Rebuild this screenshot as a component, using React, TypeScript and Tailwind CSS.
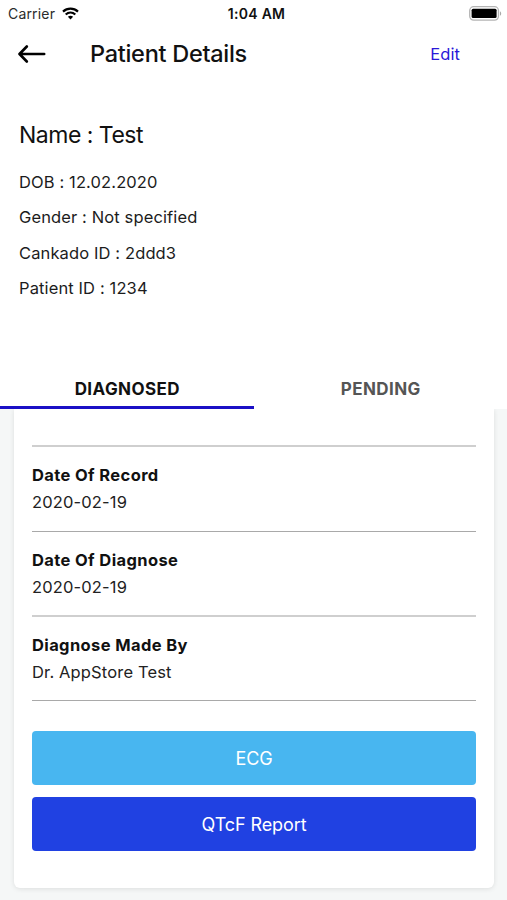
import React from "react";
import clsx from "clsx";

const patient = [
  { label: "DOB", value: "12.02.2020" },
  { label: "Gender", value: "Not specified" },
  { label: "Cankado ID", value: "2ddd3" },
  { label: "Patient ID", value: "1234" },
];

const records = [
  { label: "Date Of Record", value: "2020-02-19", className: "h-[85px] border-b border-[#a9a9a9]" },
  { label: "Date Of Diagnose", value: "2020-02-19", className: "h-[85px] border-b-2 border-[#cfcfcf]" },
  { label: "Diagnose Made By", value: "Dr. AppStore Test", className: "h-[84px] border-b border-[#a9a9a9]" },
];

const StatusBar = () => {
  return (
    <div className="grid h-[27px] grid-cols-3 items-center pl-2 pr-[5px] text-[14px]">
      <div className="flex items-center gap-[7px] text-[#2b2b2b]">
        <span className="tracking-[0.17px]">Carrier</span>
        <svg width="17" height="13" viewBox="0 0 17 13" fill="none" stroke="#000" strokeWidth="2.2">
          <path d="M1 4.6C5.2.7 11.8.7 16 4.6" />
          <path d="M3.7 7.5c2.8-2.5 6.8-2.5 9.6 0" />
          <path d="M8.5 12.4 5.9 9.8c1.5-1.3 3.7-1.3 5.2 0z" fill="#000" stroke="none" />
        </svg>
      </div>
      <span className="pl-[3px] text-center font-semibold tracking-[0.3px] text-[#111]">1:04 AM</span>
      <svg className="justify-self-end" width="33" height="15" viewBox="0 0 33 15">
        <rect x="0.7" y="0.7" width="28.8" height="13.4" rx="4" fill="#fff" stroke="#b4b4b4" strokeWidth="1.3" />
        <rect x="2.6" y="2.7" width="25" height="9.4" rx="1.5" fill="#000" />
        <path d="M31 5.2c1.6.8 1.6 3.8 0 4.6z" fill="#a8a8a8" />
      </svg>
    </div>
  );
};

const Header = () => {
  return (
    <header className="flex h-[53px] items-center pl-[18px] pr-[47px]">
      <button type="button" aria-label="Back">
        <svg
          width="28"
          height="20"
          viewBox="0 0 28 20"
          fill="none"
          stroke="#000"
          strokeWidth="2.6"
          strokeLinecap="round"
          strokeLinejoin="round"
        >
          <path d="M8.8 2.5 1.5 10l7.3 7.5M2 10h24.2" />
        </svg>
      </button>
      <h1 className="ml-[44px] pt-px text-[23.5px] font-medium tracking-[-0.28px] text-[#111]">Patient Details</h1>
      <button type="button" className="ml-auto pt-px text-[16.5px] tracking-[0.1px] text-[#2a18d8]">
        Edit
      </button>
    </header>
  );
};

const App = () => {
  return (
    <div className="flex h-[900px] w-[507px] flex-col overflow-hidden bg-white font-['Inter',sans-serif]">
      <StatusBar />
      <Header />
      <section className="h-[289px] px-[19px] pt-[38px] text-[#1c1c1c]">
        <h2 className="text-[23px] leading-[34px] tracking-[-0.5px] text-[#111]">Name : Test</h2>
        <div className="mt-[13px] text-[16.5px] leading-[35.4px] tracking-[0.12px]">
          {patient.map(({ label, value }) => (
            <p key={label}>
              {label} : {value}
            </p>
          ))}
        </div>
      </section>
      <nav className="grid h-10 grid-cols-2 text-[17px] font-bold tracking-[0.4px]">
        <button type="button" className="border-b-3 border-[#1b10c6] pt-1 pl-px text-[#111]">
          DIAGNOSED
        </button>
        <button type="button" className="border-b-3 border-white pt-1 pl-px text-[#555]">
          PENDING
        </button>
      </nav>
      <main className="flex-1 overflow-hidden bg-[#f5f7f7] px-[13px]">
        <div className="ml-px h-[479px] rounded-b-[6px] bg-white px-[18px] shadow-[0_1px_5px_rgba(0,0,0,0.1)]">
          <div className="h-[38px] border-b-2 border-[#cfcfcf]" />
          {records.map(({ label, value, className }) => (
            <div key={label} className={clsx("pt-[15px] text-[16.5px] leading-[27px]", className)}>
              <p className="font-bold tracking-[0.38px] text-[#111]">{label}</p>
              <p className="tracking-[0.15px] text-[#222]">{value}</p>
            </div>
          ))}
          <div className="mt-[30px] flex flex-col gap-3 text-[18px] tracking-[-0.1px] text-white">
            <button type="button" className="h-[54px] rounded bg-[#48b6f0]">
              ECG
            </button>
            <button type="button" className="h-[54px] rounded bg-[#2041e2]">
              QTcF Report
            </button>
          </div>
        </div>
      </main>
    </div>
  );
};

export default App;
